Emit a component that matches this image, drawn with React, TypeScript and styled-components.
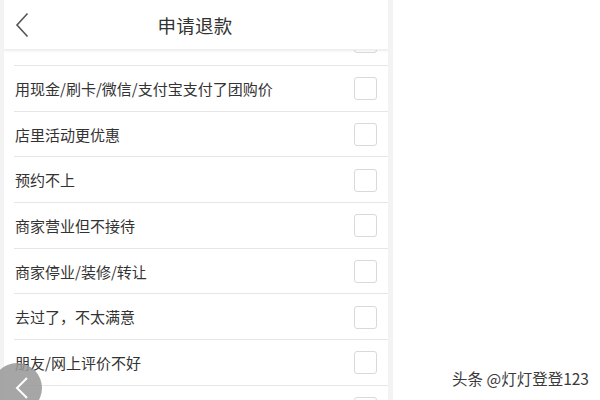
import React from "react";
import styled, { createGlobalStyle } from "styled-components";

const Global = createGlobalStyle`
  html, body { margin: 0; padding: 0; background: #fff; }
  body { font-family: "Noto Sans CJK SC", "Noto Sans", sans-serif; }
`;

const Page = styled.div`
  width: 600px;
  height: 400px;
  display: flex;
  overflow: hidden;
  position: relative;
  background: #fff;
`;

const Phone = styled.div`
  width: 384px;
  height: 400px;
  padding: 0 5px 0 4px;
  background: #f3f3f3;
  display: flex;
  flex-direction: column;
  flex-shrink: 0;
`;

const Screen = styled.div`
  flex: 1;
  background: #fff;
  display: flex;
  flex-direction: column;
  overflow: hidden;
  position: relative;
`;

const Header = styled.div`
  height: 50px;
  flex-shrink: 0;
  display: flex;
  align-items: center;
  justify-content: center;
  position: relative;
  z-index: 2;
  background: #fff;
  box-shadow: 0 1px 2px rgba(0, 0, 0, 0.08);
  border-bottom: 1px solid #efefef;
  box-sizing: border-box;
`;

const BackBtn = styled.div`
  position: absolute;
  left: 11px;
  top: 12px;
  width: 20px;
  height: 26px;
  display: flex;
  align-items: center;
`;

const Title = styled.div`
  font-size: 18.5px;
  color: #333;
  letter-spacing: 0.3px;
  margin-right: 2px;
`;

const List = styled.div`
  display: flex;
  flex-direction: column;
`;

const Row = styled.div<{ $clipped?: boolean }>`
  height: ${(p) => (p.$clipped ? "15px" : "44.7px")};
  margin-left: 10px;
  border-bottom: 1px solid #e6e6e6;
  display: flex;
  align-items: ${(p) => (p.$clipped ? "flex-end" : "center")};
  justify-content: space-between;
  overflow: hidden;
  padding-right: 11px;
`;

const Label = styled.span`
  font-size: 15px;
  color: #333;
  margin-left: 1px;
`;

const Box = styled.div<{ $clipped?: boolean }>`
  width: 21px;
  height: 21px;
  border: 1px solid #d9d9d9;
  border-radius: 3px;
  flex-shrink: 0;
  margin-bottom: ${(p) => (p.$clipped ? "12px" : "0")};
  margin-top: 1px;
`;

const Floater = styled.div`
  position: absolute;
  left: -8px;
  top: 363px;
  width: 50px;
  height: 50px;
  border-radius: 50%;
  background: rgba(150, 150, 150, 0.85);
  display: flex;
  align-items: center;
  justify-content: center;
  z-index: 3;
`;

const Watermark = styled.div`
  position: absolute;
  left: 452px;
  top: 367px;
  font-size: 15.5px;
  color: #3a3a3a;
  font-family: "Noto Sans CJK SC", sans-serif;
  text-shadow: 0 0 2px #fff, 0 0 2px #fff;
`;

const reasons = [
  "用现金/刷卡/微信/支付宝支付了团购价",
  "店里活动更优惠",
  "预约不上",
  "商家营业但不接待",
  "商家停业/装修/转让",
  "去过了，不太满意",
  "朋友/网上评价不好",
  "",
];

export default function App() {
  return (
    <Page>
      <Global />
      <Phone>
        <Screen>
          <Header>
            <BackBtn>
              <svg width="14" height="26" viewBox="0 0 14 26">
                <path d="M12.5 1.5 L2 13 L12.5 24.5" fill="none" stroke="#555" strokeWidth="1.6" />
              </svg>
            </BackBtn>
            <Title>申请退款</Title>
          </Header>
          <List>
            <Row $clipped>
              <span />
              <Box $clipped />
            </Row>
            {reasons.map((r, i) => (
              <Row key={i}>
                <Label>{r}</Label>
                <Box />
              </Row>
            ))}
          </List>
        </Screen>
      </Phone>
      <Floater>
        <svg width="16" height="24" viewBox="0 0 16 24" style={{ marginLeft: 10 }}>
          <path d="M13 2 L3 12 L13 22" fill="none" stroke="#fff" strokeWidth="2" />
        </svg>
      </Floater>
      <Watermark>头条 @灯灯登登123</Watermark>
    </Page>
  );
}
